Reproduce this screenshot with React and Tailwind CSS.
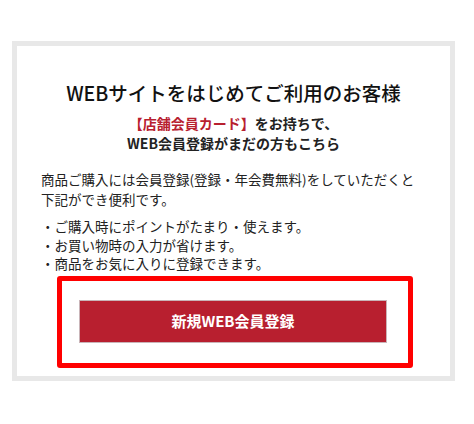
import React from 'react';

export default function App() {
  const merits = [
    'ご購入時にポイントがたまり・使えます。',
    'お買い物時の入力が省けます。',
    '商品をお気に入りに登録できます。',
  ];

  return (
    <div
      className="w-[474px] h-[424px] bg-white pt-[41px] pl-[12px]"
      style={{ fontFamily: '"Noto Sans CJK JP", "Noto Sans", sans-serif' }}
    >
      {/* Card */}
      <section className="w-[443px] h-[340px] border-[5px] border-[#e8e8e8] bg-white pt-[33px]">
        <h2 className="text-center text-[19.5px] leading-[28px] text-[#111] font-medium">
          WEBサイトをはじめてご利用のお客様
        </h2>
        <p className="mt-[6px] text-center text-[14px] leading-[20px] font-bold text-[#222]">
          <span className="text-[#b8202f]">【店舗会員カード】</span>をお持ちで、
          <br />
          WEB会員登録がまだの方もこちら
        </p>

        <div className="px-[24px] text-[13.5px] text-[#222]">
          <p className="mt-[16px] leading-[20px]">
            商品ご購入には会員登録(登録・年会費無料)をしていただくと
            <br />
            下記ができ便利です。
          </p>
          <ul className="mt-[8px] leading-[18.5px]">
            {merits.map((m) => (
              <li key={m}>・{m}</li>
            ))}
          </ul>
        </div>

        {/* Highlighted button area */}
        <div className="mt-[3px] ml-[40px] w-[356px] h-[92px] border-[5px] border-[#ff0000] rounded-[3px] pt-[19px] pl-[17px]">
          <button className="w-[308px] h-[43px] bg-[#b81f2f] border border-[#c9b4b8] text-white text-[15px] font-bold flex items-center justify-center">
            新規WEB会員登録
          </button>
        </div>
      </section>
    </div>
  );
}
